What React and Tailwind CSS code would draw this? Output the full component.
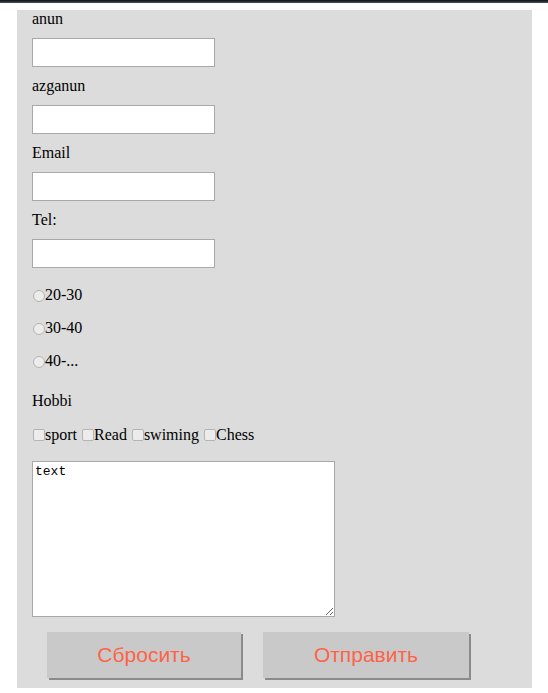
import React from "react";

const serif = { fontFamily: '"Liberation Serif", "Times New Roman", serif' };

function Field({ label }) {
  return (
    <div>
      <div className="h-[18px] leading-[18px] text-[16px] text-black">{label}</div>
      <input
        type="text"
        className="mt-[10px] mb-[10px] block h-[29px] w-[183px] border border-[#a9a9a9] bg-white outline-none"
      />
    </div>
  );
}

function Radio({ label, first }) {
  return (
    <div className={`${first ? "mt-[18px]" : "mt-[15px]"} flex h-[18px] items-center leading-[18px] text-[16px]`}>
      <span className="ml-[1px] mt-[1px] inline-block h-[12px] w-[12px] rounded-full border border-[#b4b4b4] bg-[#ececec]" />
      <span>{label}</span>
    </div>
  );
}

function Check({ label }) {
  return (
    <>
      <span className="relative top-[1px] ml-[1px] inline-block h-[12px] w-[12px] rounded-[2px] border border-[#b4b4b4] bg-[#ececec]" />
      {label}
    </>
  );
}

export default function App() {
  return (
    <div className="min-h-screen bg-white" style={serif}>
      <div className="h-[3px] bg-gradient-to-b from-[#0d0f14] to-[#4b5563]" />
      <div className="ml-[17px] mt-[7px] w-[515px] bg-[#dcdcdc] pl-[15px] pb-[10px]">
        <Field label="anun" />
        <Field label="azganun" />
        <Field label="Email" />
        <Field label="Tel:" />

        <Radio label="20-30" first />
        <Radio label="30-40" />
        <Radio label="40-..." />

        <div className="mt-[22px] h-[18px] leading-[18px] text-[16px]">Hobbi</div>
        <div className="mt-[16px] h-[18px] leading-[18px] text-[16px] whitespace-pre">
          <Check label="sport" /> <Check label="Read" /> <Check label="swiming" /> <Check label="Chess" />
        </div>

        <textarea
          defaultValue="text"
          className="mt-[17px] block h-[156px] w-[303px] border border-[#a9a9a9] bg-white px-[2px] py-[2px] text-[13px] leading-[15px] outline-none"
          style={{ fontFamily: '"Liberation Mono", "Courier New", monospace' }}
        />

        <div className="mt-[15px] flex" style={{ fontFamily: '"Liberation Sans", Arial, sans-serif' }}>
          <button className="ml-[15px] h-[46px] w-[194px] bg-[#c9c9c9] text-[21px] text-[#ff6347] shadow-[2px_2px_0_#8a8a8a]">
            Сбросить
          </button>
          <button className="ml-[22px] h-[46px] w-[206px] bg-[#c9c9c9] text-[21px] text-[#ff6347] shadow-[2px_2px_0_#8a8a8a]">
            Отправить
          </button>
        </div>
      </div>
    </div>
  );
}
